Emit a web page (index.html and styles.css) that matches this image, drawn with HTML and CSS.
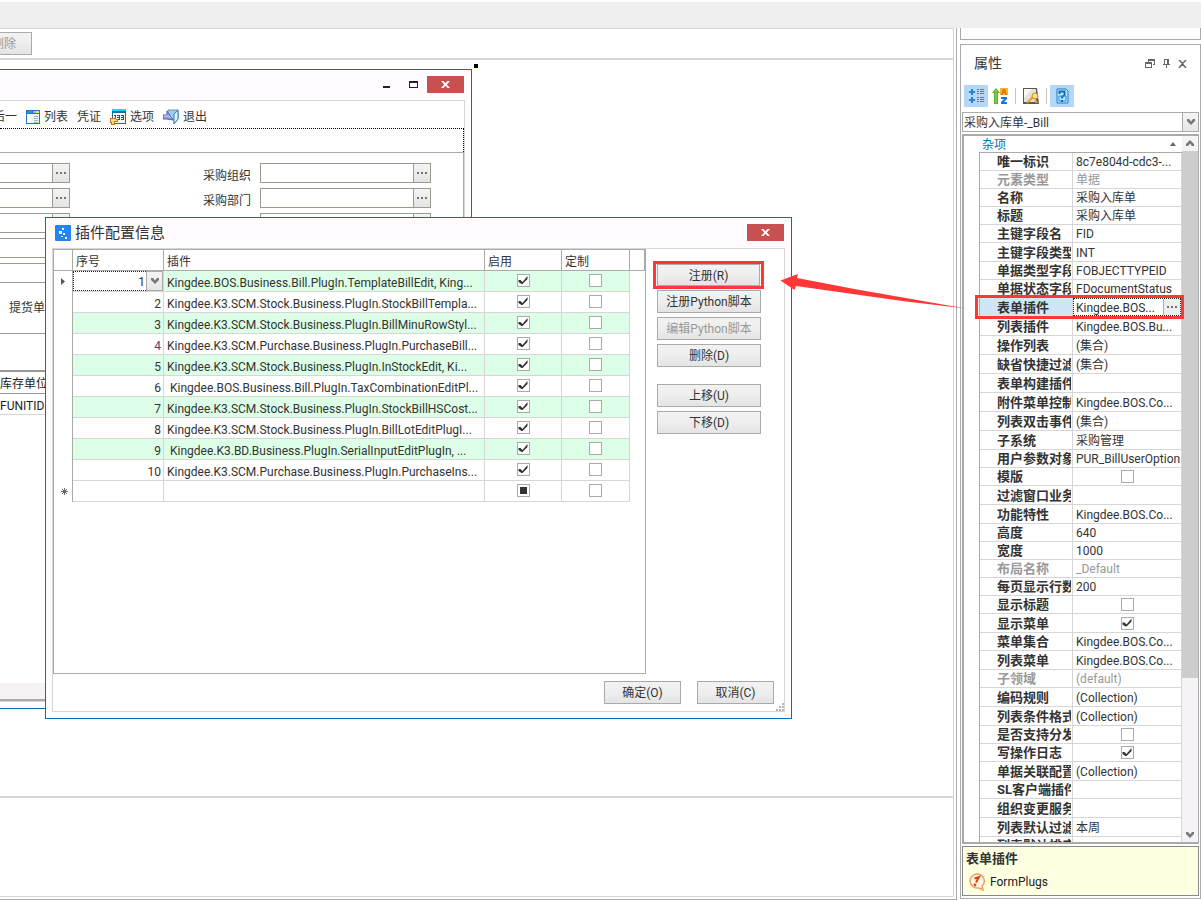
FILE: index.html
```html
<!DOCTYPE html>
<html lang="zh-CN">
<head>
<meta charset="utf-8">
<title>插件配置信息</title>
<link rel="stylesheet" href="styles.css">
</head>
<body>
<svg class="defs" aria-hidden="true">
  <symbol id="i-dots" viewBox="0 0 10 2"><path d="M0 0h2v2H0zM4 0h2v2H4zM8 0h2v2H8z" fill="#737373"/></symbol>
  <symbol id="i-down" viewBox="0 0 8 6"><path d="M0 0h2l2 2.500 2-2.500h2v2L4 6 0 2z" fill="#777"/></symbol>
  <symbol id="i-x" viewBox="0 0 9 7"><path d="M0 0h2.500l2 2.200 2-2.200H9L5.800 3.500 9 7H6.500l-2-2.200-2 2.200H0l3.200-3.500z" fill="currentColor"/></symbol>
</svg>
<header class="topbar"></header>
<div class="shell">
  <main class="designer">
    <div class="strip"><button class="btn cut" type="button" disabled>删除</button></div>
    <section class="canvas">
      <span class="handle"></span>
      <section class="window form-window">
        <div class="win-title">
          <button class="sys" type="button" aria-label="最小化"><svg width="7" height="7"><path d="M0 5h7v2H0z" fill="#222"/></svg></button>
          <button class="sys" type="button" aria-label="最大化"><svg width="9" height="7"><path d="M0 0h9v7H0zM1 2v4h7V2z" fill="#222" fill-rule="evenodd"/></svg></button>
          <button class="close" type="button" aria-label="关闭"><svg width="9" height="7"><use href="#i-x"/></svg></button>
        </div>
        <div class="win-body">
          <nav class="form-tools">
            <button type="button">后一</button>
            <button type="button"><svg width="14" height="14"><path d="M0 0h14v14H0z" fill="#2675bd"/><path d="M1 4h12v9H1z" fill="#eef3f8"/><path d="M1 1h5v2H1z" fill="#1599e8"/><path d="M7 1h3v2H7z" fill="#6dc8f1"/><path d="M10 1h3v2h-3z" fill="#ffe14d"/><path d="M1 4h4v9H1z" fill="#fff"/><path d="M8 6h4v1H8zm0 2h4v1H8zm0 2h4v1H8zm0 2h4v1H8z" fill="#a7b2ba"/></svg>列表</button>
            <button type="button">凭证</button>
            <button type="button"><svg width="16" height="16"><path d="M2 0h14v15H2z" fill="#2464aa"/><path d="M2 0h14v2H2z" fill="#00e0ff"/><path d="M3 4h12v10H3z" fill="#f3f5f6"/><path d="M4 6h2v5H5V7H4zm3 0h3v5H7V10h2V9H7V8h2V7H7zm4 0h3v5h-3v-1h2V9h-2V8h2V7h-2z" fill="#c41616"/><path d="M0 9h6v1h2v3H5v3H1v-2H0z" fill="#b97a20"/><path d="M1 10h5v1h1v1H4v3H2v-2H1z" fill="#ffd977"/></svg>选项</button>
            <button type="button"><svg width="16" height="16"><path d="M5 1h10v9l-4 5V10H5z" fill="#a8c9e7" stroke="#6593bd"/><path d="M15 1l-4 4v10l4-5z" fill="#d8f1fc" stroke="#377fae"/><path d="M0 6h4V2l6 9-6-1H0z" fill="#8f9cec" stroke="#5364be"/><path d="M1 7h5l2 2" stroke="#c9d2ff" fill="none"/></svg>退出</button>
          </nav>
          <div class="focus-strip"></div>
          <div class="form-area">
            <div class="field-row"><div class="lookup left"><input type="text" aria-label="单据编号"><button type="button" aria-label="选择"><svg width="10" height="2"><use href="#i-dots"/></svg></button></div><label for="org">采购组织</label><div class="lookup"><input type="text" id="org"><button type="button" aria-label="选择组织"><svg width="10" height="2"><use href="#i-dots"/></svg></button></div></div>
            <div class="field-row"><div class="lookup left"><input type="text" aria-label="日期"><button type="button" aria-label="选择"><svg width="10" height="2"><use href="#i-dots"/></svg></button></div><label for="dept">采购部门</label><div class="lookup"><input type="text" id="dept"><button type="button" aria-label="选择部门"><svg width="10" height="2"><use href="#i-dots"/></svg></button></div></div>
            <div class="field-row"><div class="lookup left"><input type="text" aria-label="仓库"><button type="button" aria-label="选择"></button></div><span class="gap"></span><div class="lookup"><input type="text" aria-label="人员"><button type="button" aria-label="选择人员"></button></div></div>
            <div class="field-row"><div class="lookup left"><input type="text" aria-label="供应商"></div></div>
            <div class="field-row"><div class="lookup left"><input type="text" aria-label="备注"></div></div>
            <p class="ship">提货单</p>
            <table class="units"><thead><tr><th>库存单位</th></tr></thead><tbody><tr><td>FUNITID</td></tr></tbody></table>
            <div class="hscroll"></div>
          </div>
        </div>
      </section>

      <section class="window dialog" role="dialog" aria-labelledby="dlg">
        <div class="win-title">
          <svg width="16" height="16"><rect width="16" height="16" rx="1" fill="#2186f3"/><path d="M7 3h2v2H7zM4 6h3v3H4zM8 8h2v2H8zM6 11h2v1H6zM10 12h2v2h-2z" fill="#fff"/></svg>
          <h1 id="dlg">插件配置信息</h1>
          <button class="close" type="button" aria-label="关闭"><svg width="9" height="7"><use href="#i-x"/></svg></button>
        </div>
        <div class="win-body">
          <div class="dlg-main">
            <div class="grid-box">
              <table class="plugins">
                <colgroup><col class="c0"><col class="c1"><col class="c2"><col class="c3"><col class="c4"><col></colgroup>
                <thead><tr><th></th><th>序号</th><th>插件</th><th>启用</th><th>定制</th><th></th></tr></thead>
                <tbody>
                  <tr><td><svg width="4" height="7"><path d="M0 0l4 3.500L0 7z" fill="#555"/></svg></td><td class="editing"><div class="cell-select"><select aria-label="序号"><option>1</option></select><span class="drop"><svg width="8" height="6"><use href="#i-down"/></svg></span></div></td><td>Kingdee.BOS.Business.Bill.PlugIn.TemplateBillEdit, King...</td><td><input type="checkbox" aria-label="启用" checked></td><td><input type="checkbox" aria-label="定制"></td><td></td></tr>
                  <tr><td></td><td>2</td><td>Kingdee.K3.SCM.Stock.Business.PlugIn.StockBillTempla...</td><td><input type="checkbox" aria-label="启用" checked></td><td><input type="checkbox" aria-label="定制"></td><td></td></tr>
                  <tr><td></td><td>3</td><td>Kingdee.K3.SCM.Stock.Business.PlugIn.BillMinuRowStyl...</td><td><input type="checkbox" aria-label="启用" checked></td><td><input type="checkbox" aria-label="定制"></td><td></td></tr>
                  <tr><td></td><td class="edited">4</td><td>Kingdee.K3.SCM.Purchase.Business.PlugIn.PurchaseBill...</td><td><input type="checkbox" aria-label="启用" checked></td><td><input type="checkbox" aria-label="定制"></td><td></td></tr>
                  <tr><td></td><td>5</td><td>Kingdee.K3.SCM.Stock.Business.PlugIn.InStockEdit, Ki...</td><td><input type="checkbox" aria-label="启用" checked></td><td><input type="checkbox" aria-label="定制"></td><td></td></tr>
                  <tr><td></td><td>6</td><td>&nbsp;Kingdee.BOS.Business.Bill.PlugIn.TaxCombinationEditPl...</td><td><input type="checkbox" aria-label="启用" checked></td><td><input type="checkbox" aria-label="定制"></td><td></td></tr>
                  <tr><td></td><td>7</td><td>Kingdee.K3.SCM.Stock.Business.PlugIn.StockBillHSCost...</td><td><input type="checkbox" aria-label="启用" checked></td><td><input type="checkbox" aria-label="定制"></td><td></td></tr>
                  <tr><td></td><td>8</td><td>Kingdee.K3.SCM.Stock.Business.PlugIn.BillLotEditPlugI...</td><td><input type="checkbox" aria-label="启用" checked></td><td><input type="checkbox" aria-label="定制"></td><td></td></tr>
                  <tr><td></td><td>9</td><td>&nbsp;Kingdee.K3.BD.Business.PlugIn.SerialInputEditPlugIn, ...</td><td><input type="checkbox" aria-label="启用" checked></td><td><input type="checkbox" aria-label="定制"></td><td></td></tr>
                  <tr><td></td><td>10</td><td>Kingdee.K3.SCM.Purchase.Business.PlugIn.PurchaseIns...</td><td><input type="checkbox" aria-label="启用" checked></td><td><input type="checkbox" aria-label="定制"></td><td></td></tr>
                  <tr><td><svg width="7" height="7"><path d="M3.500 0v7M0 3.500h7M1 1l5 5M6 1L1 6" stroke="#666" fill="none"/></svg></td><td></td><td></td><td><input type="checkbox" class="mixed" aria-label="启用"></td><td><input type="checkbox" aria-label="定制"></td><td></td></tr>
                </tbody>
              </table>
            </div>
            <div class="actions">
              <div class="marked"><button class="btn" type="button">注册(R)</button></div>
              <button class="btn" type="button">注册Python脚本</button>
              <button class="btn" type="button" disabled>编辑Python脚本</button>
              <button class="btn" type="button">删除(D)</button>
              <button class="btn group" type="button">上移(U)</button>
              <button class="btn" type="button">下移(D)</button>
            </div>
          </div>
          <footer class="dlg-foot">
            <button class="btn" type="button">确定(O)</button>
            <button class="btn" type="button">取消(C)</button>
            <svg class="grip" width="8" height="8"><path d="M6 0h2v2H6zM3 3h2v2H3zM6 3h2v2H6zM0 6h2v2H0zM3 6h2v2H3zM6 6h2v2H6z" fill="#b5b5b5"/></svg>
          </footer>
        </div>
      </section>
      <svg class="arrow" width="186" height="36" viewBox="780 273 186 36"><path d="M780.500 280.500L798 274l-1 4 60 11.500 60 10.500 49 8.500-60-7-110-15.500-1.500 4z" fill="#ff3737"/></svg>
    </section>
    <section class="output"></section>
  </main>

  <aside class="side">
    <div class="side-stub"></div>
    <section class="props">
      <div class="props-head">
        <h2>属性</h2>
        <button type="button" aria-label="还原"><svg width="10" height="9"><path d="M3 0h7v6H8V5h1V2H4v1H3zM0 3h7v6H0zm1 2v3h5V5z" fill="#666" fill-rule="evenodd"/></svg></button>
        <button type="button" aria-label="固定"><svg width="7" height="9"><path d="M1 0h5v5h1v1H4v3H3V6H0V5h1zm1 1v4h2V1z" fill="#666" fill-rule="evenodd"/></svg></button>
        <button type="button" aria-label="关闭"><svg width="9" height="8"><path d="M1 0l3.500 3.500L8 0M1 8l3.500-4L8 8" stroke="#666" stroke-width="1.500" fill="none"/></svg></button>
      </div>
      <div class="props-tools">
        <button class="on" type="button" aria-label="按分类"><svg width="15" height="15"><path d="M0 3h2V1h2v2h2v2H4v2H2V5H0zM0 11h2V9h2v2h2v2H4v2H2v-2H0z" fill="#2583dc"/><path d="M8 1h2v1H8zm3 0h4v1h-4zM8 3h2v1H8zm3 0h4v1h-4zM8 5h2v1H8zm3 0h4v1h-4zM8 9h2v1H8zm3 0h4v1h-4zM8 11h2v1H8zm3 0h4v1h-4zM8 13h2v1H8zm3 0h4v1h-4z" fill="#777"/></svg></button>
        <button type="button" aria-label="按字母"><svg width="16" height="16"><path d="M4 0l4 5H6v11H2V5H0z" fill="#62b324"/><path d="M4 2v13" stroke="#9cdb55"/><path d="M8 0h8v7H8z" fill="#f9b23a"/><path d="M9 7l2-6h2l2 6h-2V5h-2v2z" fill="#e87400"/><path d="M9 9h6v2l-3 3h3v2H9v-2l3-3H9z" fill="#1579d1"/></svg></button>
        <i></i>
        <button type="button" aria-label="属性页"><svg width="16" height="16"><path d="M0 0h14l2 16H0z" fill="#55585a"/><path d="M1 1h12v13H1z" fill="#e4e1da"/><path d="M1 1h8L1 10z" fill="#f9f7f0"/><circle cx="12" cy="8" r="3" fill="#ffe090" stroke="#c98c12"/><path d="M10 9l-6 6" stroke="#e09b19" stroke-width="2"/><path d="M12 12l2 3" stroke="#e4a63a" stroke-width="2"/></svg></button>
        <i></i>
        <button class="on" type="button" aria-label="帮助"><svg width="13" height="16"><path d="M1 1h9l2 2v12H1z" fill="#b8eaff" stroke="#2477c4"/><path d="M3.500 6V3.500h5V7L6 9v1.500" stroke="#1767b7" stroke-width="2" fill="none"/><path d="M3 8h7v5H3z" fill="none" stroke="#268be0"/><path d="M5 12h2v2H5z" fill="#1767b7"/></svg></button>
      </div>
      <div class="combo"><select aria-label="对象"><option>采购入库单-_Bill</option></select><span class="drop"><svg width="8" height="6"><use href="#i-down"/></svg></span></div>
      <div class="prop-grid">
        <div class="prop-list">
          <div class="category"><span>杂项</span><svg width="6" height="4"><path d="M3 0l3 4H0z" fill="#666"/></svg></div>
          <table class="prop-table">
            <colgroup><col class="name"><col></colgroup>
            <tbody>
              <tr><th><span>唯一标识</span></th><td>8c7e804d-cdc3-...</td></tr>
              <tr class="off"><th><span>元素类型</span></th><td>单据</td></tr>
              <tr><th><span>名称</span></th><td>采购入库单</td></tr>
              <tr><th><span>标题</span></th><td>采购入库单</td></tr>
              <tr><th><span>主键字段名</span></th><td>FID</td></tr>
              <tr class="tall"><th><span>主键字段类型</span></th><td>INT</td></tr>
              <tr><th><span>单据类型字段</span></th><td>FOBJECTTYPEID</td></tr>
              <tr><th><span>单据状态字段</span></th><td>FDocumentStatus</td></tr>
              <tr class="tall current"><th><span>表单插件</span></th><td><div class="prop-edit"><b>Kingdee.BOS...</b><button type="button" aria-label="编辑表单插件"><svg width="10" height="2"><use href="#i-dots"/></svg></button></div></td></tr>
              <tr class="tall"><th><span>列表插件</span></th><td>Kingdee.BOS.Bu...</td></tr>
              <tr class="tall"><th><span>操作列表</span></th><td>(集合)</td></tr>
              <tr class="tall"><th><span>缺省快捷过滤</span></th><td>(集合)</td></tr>
              <tr class="tall"><th><span>表单构建插件</span></th><td></td></tr>
              <tr class="tall"><th><span>附件菜单控制</span></th><td>Kingdee.BOS.Co...</td></tr>
              <tr class="tall"><th><span>列表双击事件</span></th><td>(集合)</td></tr>
              <tr class="tall"><th><span>子系统</span></th><td>采购管理</td></tr>
              <tr><th><span>用户参数对象</span></th><td>PUR_BillUserOption</td></tr>
              <tr><th><span>模版</span></th><td class="mid"><input type="checkbox" aria-label="模版"></td></tr>
              <tr class="tall"><th><span>过滤窗口业务</span></th><td></td></tr>
              <tr class="tall"><th><span>功能特性</span></th><td>Kingdee.BOS.Co...</td></tr>
              <tr><th><span>高度</span></th><td>640</td></tr>
              <tr><th><span>宽度</span></th><td>1000</td></tr>
              <tr class="off"><th><span>布局名称</span></th><td>_Default</td></tr>
              <tr><th><span>每页显示行数</span></th><td>200</td></tr>
              <tr><th><span>显示标题</span></th><td class="mid"><input type="checkbox" aria-label="显示标题"></td></tr>
              <tr class="tall"><th><span>显示菜单</span></th><td class="mid"><input type="checkbox" aria-label="显示菜单" checked></td></tr>
              <tr><th><span>菜单集合</span></th><td>Kingdee.BOS.Co...</td></tr>
              <tr class="tall"><th><span>列表菜单</span></th><td>Kingdee.BOS.Co...</td></tr>
              <tr class="off"><th><span>子领域</span></th><td>(default)</td></tr>
              <tr class="tall"><th><span>编码规则</span></th><td>(Collection)</td></tr>
              <tr class="tall"><th><span>列表条件格式</span></th><td>(Collection)</td></tr>
              <tr><th><span>是否支持分发</span></th><td class="mid"><input type="checkbox" aria-label="是否支持分发"></td></tr>
              <tr><th><span>写操作日志</span></th><td class="mid"><input type="checkbox" aria-label="写操作日志" checked></td></tr>
              <tr class="tall"><th><span>单据关联配置</span></th><td>(Collection)</td></tr>
              <tr><th><span>SL客户端插件</span></th><td></td></tr>
              <tr class="tall"><th><span>组织变更服务</span></th><td></td></tr>
              <tr class="tall"><th><span>列表默认过滤</span></th><td>本周</td></tr>
              <tr><th><span>列表默认排序</span></th><td></td></tr>
            </tbody>
          </table>
        </div>
        <div class="vscroll">
          <svg width="8" height="6"><path d="M0 6h2l2-2.500L6 6h2V4L4 0 0 4z" fill="#777"/></svg>
          <div class="track"><div class="thumb"></div></div>
          <svg width="8" height="6"><use href="#i-down"/></svg>
        </div>
      </div>
      <div class="hint">
        <h3>表单插件</h3>
        <p><svg width="18" height="18"><path d="M8.500 1a7.500 7 0 1 0 2.500 14l4 2-1-4A7.500 7 0 0 0 8.500 1z" fill="#fff8ea" stroke="#eda15a" stroke-width="1.500"/><path d="M6.500 5.500L11 4 8 9.500" stroke="#d8460d" stroke-width="2" fill="none"/><circle cx="7" cy="12" r="1.400" fill="#d8460d"/></svg>FormPlugs</p>
      </div>
    </section>
  </aside>
</div>
</body>
</html>
```
FILE: styles.css
```css
* { box-sizing: border-box; }
body {
  margin: 0;
  height: 100vh;
  display: flex;
  flex-direction: column;
  overflow: hidden;
  background: #fff;
  color: #333;
  font: 12px/16px Roboto, "Noto Sans CJK SC", sans-serif;
}
button, input, select { font: inherit; color: inherit; margin: 0; padding: 0; border: 0; background: none; }
h1, h2, h3, p { margin: 0; font-weight: normal; }
svg { display: block; flex: none; }
table { border-collapse: separate; border-spacing: 0; table-layout: fixed; }
th, td { padding: 0; text-align: left; font-weight: normal; white-space: nowrap; }
.defs { position: absolute; width: 0; height: 0; }

.topbar { flex: none; height: 28px; background: #efefef; border-top: 2px solid #fff; }
.shell { flex: 1; min-height: 0; display: flex; gap: 3px; }

.designer {
  flex: 1;
  min-width: 0;
  display: flex;
  flex-direction: column;
  padding: 0 2px 2px 0;
  border-right: 1px solid #aaa;
  border-bottom: 1px solid #aaa;
}
.strip { flex: none; height: 32px; padding: 3px 0; border: solid #d6d6d6; border-width: 1px 1px 2px 0; }
.btn {
  display: block;
  height: 23px;
  width: 100%;
  border: 1px solid #aaa;
  background: linear-gradient(#f2f2f2, #eee 50%, #e4e4e4);
  line-height: 22px;
  text-align: center;
  white-space: nowrap;
}
.btn:disabled { color: #999; }
.btn.cut { width: 56px; margin-left: -24px; }
.canvas { position: relative; flex: 1; min-height: 0; border-right: 1px solid #d6d6d6; }
.output { flex: none; height: 101px; border: solid #d6d6d6; border-width: 2px 1px 1px 0; }

/* Windows on the design canvas */
.handle { position: absolute; left: 474px; top: 4px; width: 4px; height: 4px; background: #000; }
.window { position: absolute; display: flex; flex-direction: column; background: #fffbff; border: 1px solid #0070bd; padding: 0 6px 6px; }
.form-window { left: 0; top: 9px; width: 472px; height: 640px; border-left: 0; padding-left: 0; }
.win-title { flex: none; height: 30px; display: flex; align-items: center; padding: 0 1px 1px 0; }
.win-title h1 { font-size: 15px; line-height: 20px; padding-left: 4px; }
.win-body { flex: 1; min-height: 0; display: flex; flex-direction: column; background: #fff; border: 1px solid #d6d6d6; }
.close { display: flex; align-items: center; justify-content: center; width: 37px; height: 17px; margin-left: auto; background: #c75050; color: #fff; }
.form-window .win-body { border-left: 0; }
.form-window .win-title { justify-content: flex-end; }
.form-window .close { margin: 0; }
.sys { width: 27px; height: 17px; display: flex; align-items: center; justify-content: center; }
.form-tools { flex: none; height: 27px; display: flex; align-items: center; gap: 9px; margin-left: -7px; padding-top: 4px; }
.form-tools button { display: flex; align-items: center; gap: 4px; white-space: nowrap; }
.focus-strip { flex: none; height: 24px; border: 1px dotted #000; border-width: 1px 1px 0 0; }
.form-area { flex: 1; display: flex; flex-direction: column; border: solid #aaa; border-width: 1px 1px 0 0; padding-top: 10px; }
.field-row { flex: none; display: flex; align-items: center; height: 20px; margin-bottom: 5px; }
.field-row label, .field-row .gap { width: 190px; padding: 5px 9px 0 0; text-align: right; }
.lookup { display: flex; width: 171px; height: 20px; border: 1px solid #999b8f; }
.lookup.left { width: 70px; border-left: 0; }
.lookup input { flex: 1; min-width: 0; }
.lookup button { width: 17px; display: flex; align-items: center; justify-content: center; border-left: 1px solid #999b8f; background: linear-gradient(#f4f4f4, #e4e4e4); }
.ship { padding: 12px 0 0 9px; height: 46px; border-bottom: 1px solid #999b8f; }
.units { width: 100%; margin-top: 36px; border-top: 2px solid #999; color: #222; }
.units th { height: 22px; padding-top: 3px; border-bottom: 1px solid #999; }
.units td { height: 21px; padding-top: 3px; border-bottom: 1px solid #d6d6d6; }
.hscroll { height: 18px; margin-top: auto; background: #f6f2f6; border-bottom: 2px solid #aaa; }

.dialog { left: 45px; top: 157px; width: 747px; height: 502px; }
.dialog .win-title { padding-left: 3px; }
.dlg-main { flex: 1; min-height: 0; display: flex; gap: 7px; }
.grid-box { width: 593px; border: 1px solid #aaa; }
.plugins { width: 100%; }
.plugins .c0 { width: 19px; }
.plugins .c1 { width: 91px; }
.plugins .c2 { width: 321px; }
.plugins .c3 { width: 77px; }
.plugins .c4 { width: 68px; }
.plugins th { height: 21px; padding: 3px 0 0 3px; border: solid #aaa; border-width: 0 1px 1px 0; }
.plugins td { height: 21px; padding: 3px 0 0 3px; border: solid #d6d6d6; border-width: 0 1px 1px 0; }
.plugins td:first-child { padding: 0 0 0 7px; border-right-color: #aaa; border-bottom: 0; }
.plugins td:last-child { border: 0; }
.plugins td:nth-child(2) { text-align: right; padding-right: 2px; }
.plugins td:nth-child(4), .plugins td:nth-child(5) { padding: 0 0 1px; }
.plugins tr:nth-child(odd) td:nth-child(n+2):nth-child(-n+5) { background: #deffe7; }
.plugins tr:last-child td:nth-child(n+2):nth-child(-n+5) { background: #fff; }
.plugins tr td.editing.editing { padding: 0; }
.plugins .edited { color: #604060; }
.cell-select { display: flex; height: 20px; background: #fff; }
.cell-select select { flex: 1; min-width: 0; appearance: none; border: 1px dotted #222; border-right: 0; text-align-last: right; padding: 2px 1px 0 0; }
.drop { width: 17px; display: flex; align-items: center; justify-content: center; border: 1px solid #aaa; background: linear-gradient(#f4f4f4, #e6e6e6); }

input[type="checkbox"] { appearance: none; display: block; width: 13px; height: 13px; margin: 0 auto; border: 1px solid #aaa; background: #fff; }
input[type="checkbox"]:checked::before {
  content: "";
  display: block;
  width: 11px;
  height: 11px;
  background: #333;
  clip-path: polygon(1px 5px, 3px 5px, 5px 7px, 10px 1px, 10px 4px, 5px 9px, 4px 9px, 1px 7px);
}
input.mixed::before { content: ""; display: block; width: 7px; height: 7px; margin: 2px; background: #333; }

.actions { width: 110px; padding-top: 12px; display: flex; flex-direction: column; gap: 4px; }
.actions > .btn { width: 104px; margin-left: 4px; flex: none; }
.actions .group { margin-top: 13px; }
.marked { flex: none; width: 111px; height: 28px; padding: 0 1px; margin-bottom: -3px; border: 3px solid #ff3737; }
.marked .btn { height: 22px; width: 103px; }
.dlg-foot { position: relative; flex: none; height: 37px; display: flex; justify-content: flex-end; gap: 16px; padding: 7px 10px; }
.dlg-foot .btn { width: 77px; }
.grip { position: absolute; right: 0; bottom: 0; }
.arrow { position: absolute; left: 780px; top: 213px; z-index: 2; }

/* Property panel */
.side { flex: none; width: 241px; display: flex; flex-direction: column; gap: 4px; padding-bottom: 1px; }
.side-stub { flex: none; height: 12px; border: 1px solid #aaa; border-top: 0; }
.props { flex: 1; min-height: 0; display: flex; flex-direction: column; border: 1px solid #aaa; padding: 0 1px 2px; }
.props-head { flex: none; height: 39px; display: flex; align-items: center; gap: 8px; padding: 0 12px 4px 12px; }
.props-head h2 { flex: 1; font-size: 14px; line-height: 20px; }
.props-head button { padding-top: 2px; }
.props-tools { flex: none; height: 28px; display: flex; align-items: center; padding: 0 2px 5px; }
.props-tools button { width: 24px; height: 22px; display: flex; align-items: center; justify-content: center; }
.props-tools .on { background: #b5d7f7; }
.props-tools i { width: 1px; height: 16px; margin: 0 3px; background: #c4c4c4; }
.combo { flex: none; display: flex; height: 20px; border: 1px solid #aaa; }
.combo select { flex: 1; min-width: 0; appearance: none; padding: 2px 0 0 1px; }
.combo .drop { width: 16px; border-width: 0 0 0 1px; }
.prop-grid { flex: 1; min-height: 0; display: flex; margin: 2px 0; border: 2px solid #aaa; border-right-width: 1px; overflow: hidden; }
.prop-list { flex: 1; min-width: 0; position: relative; z-index: 1; }
.category { height: 16px; display: flex; align-items: center; justify-content: space-between; padding: 0 6px 0 18px; color: #0070c0; }
.category span { padding-top: 1px; }
.prop-table { width: calc(100% - 15px); margin-left: 15px; border: 1px solid #aaa; border-width: 1px 0 0 1px; }
.prop-table .name { width: 93px; }
.prop-table tr { position: relative; }
.prop-table th, .prop-table td { height: 18px; border: solid #d6d6d6; border-width: 0 1px 1px 0; }
.prop-table .tall th, .prop-table .tall td { height: 19px; }
.prop-table th { padding: 1px 0 0 17px; line-height: 16px; font-size: 13px; font-weight: bold; }
.prop-table th span { display: block; overflow: hidden; margin-right: 1px; }
.prop-table td { padding: 2px 0 0 3px; line-height: 15px; }
.prop-table td.mid { padding: 0; }
.prop-table .off > * { color: #999; }
.prop-table .current th { background: #cee6f7; }
.prop-table .current td { padding: 0; }
.current th::after { content: ""; box-sizing: border-box; position: absolute; left: -5px; right: -2px; top: -3px; height: 24px; border: 3px solid #ff3737; z-index: 2; }
.prop-edit { display: flex; height: 18px; border: 1px dotted #222; }
.prop-edit b { flex: 1; padding-left: 2px; font-weight: normal; line-height: 18px; }
.prop-edit button { width: 17px; display: flex; align-items: center; justify-content: center; border-left: 1px solid #aaa; background: #eee; }
.vscroll { flex: none; width: 16px; display: flex; flex-direction: column; align-items: center; gap: 5px; padding: 4px 0; background: #f6f2f6; }
.track { flex: 1; align-self: stretch; }
.thumb { height: 78%; background: #cdcdcd; }
.hint { flex: none; height: 50px; padding: 3px; border: 1px solid #888; background: #ffffe1; }
.hint h3 { font-size: 13px; line-height: 18px; font-weight: bold; }
.hint p { display: flex; align-items: center; gap: 4px; padding: 5px 0 0 2px; color: #222; }
```
